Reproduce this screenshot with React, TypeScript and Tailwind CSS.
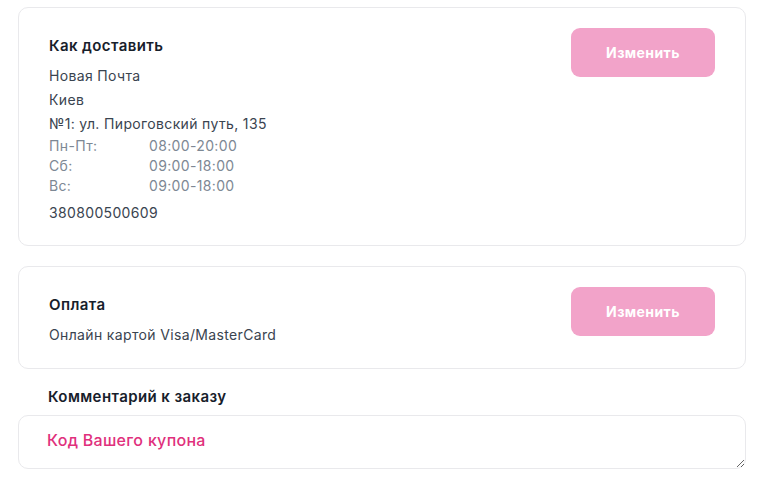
export default function App() {
  const font = { fontFamily: 'Inter, "Noto Sans", sans-serif' };
  return (
    <div style={font} className="bg-white w-[766px] h-[484px] pl-[18px] pr-[20px] pt-[7px] text-[#3a4450]">
      {/* Delivery card */}
      <div className="border border-[#e9e9ec] rounded-[10px] pl-[30px] pr-[30px] pt-[20px] pb-[20px] flex justify-between">
        <div className="pt-[8px]">
          <div className="text-[15px] leading-[20px] font-semibold tracking-[0.4px] text-[#17202b]">Как доставить</div>
          <div className="mt-[8px] text-[14px] leading-[24px] tracking-[0.35px]">
            <div>Новая Почта</div>
            <div>Киев</div>
            <div>№1: ул. Пироговский путь, 135</div>
          </div>
          <div className="text-[14px] leading-[20px] tracking-[0.35px] text-[#7d8894]">
            <div className="flex"><span className="w-[100px]">Пн-Пт:</span><span>08:00-20:00</span></div>
            <div className="flex"><span className="w-[100px]">Сб:</span><span>09:00-18:00</span></div>
            <div className="flex"><span className="w-[100px]">Вс:</span><span>09:00-18:00</span></div>
          </div>
          <div className="mt-[5px] text-[14px] leading-[24px] tracking-[0.35px]">380800500609</div>
        </div>
        <button className="w-[144px] h-[49px] rounded-[9px] bg-[#f2a3c9] text-white text-[14px] font-bold tracking-[0.4px]">Изменить</button>
      </div>

      {/* Payment card */}
      <div className="mt-[20px] border border-[#e9e9ec] rounded-[10px] pl-[30px] pr-[30px] pt-[20px] pb-[21px] flex justify-between">
        <div className="pt-[8px]">
          <div className="text-[15px] leading-[20px] font-semibold tracking-[0.4px] text-[#17202b]">Оплата</div>
          <div className="mt-[8px] text-[14px] leading-[24px] tracking-[0.35px]">Онлайн картой Visa/MasterCard</div>
        </div>
        <button className="w-[144px] h-[49px] rounded-[9px] bg-[#f2a3c9] text-white text-[14px] font-bold tracking-[0.4px]">Изменить</button>
      </div>

      {/* Comment */}
      <div className="mt-[17px] pl-[30px] text-[15px] leading-[22px] font-semibold tracking-[0.4px] text-[#17202b]">Комментарий к заказу</div>
      <textarea
        style={font}
        placeholder="Код Вашего купона"
        className="mt-[7px] block w-full h-[54px] border border-[#e9e9ec] rounded-[10px] pl-[28px] pt-[12px] text-[16px] leading-[24px] font-medium tracking-[0.3px] placeholder:text-[#e0307c] outline-none"
      />
    </div>
  );
}
